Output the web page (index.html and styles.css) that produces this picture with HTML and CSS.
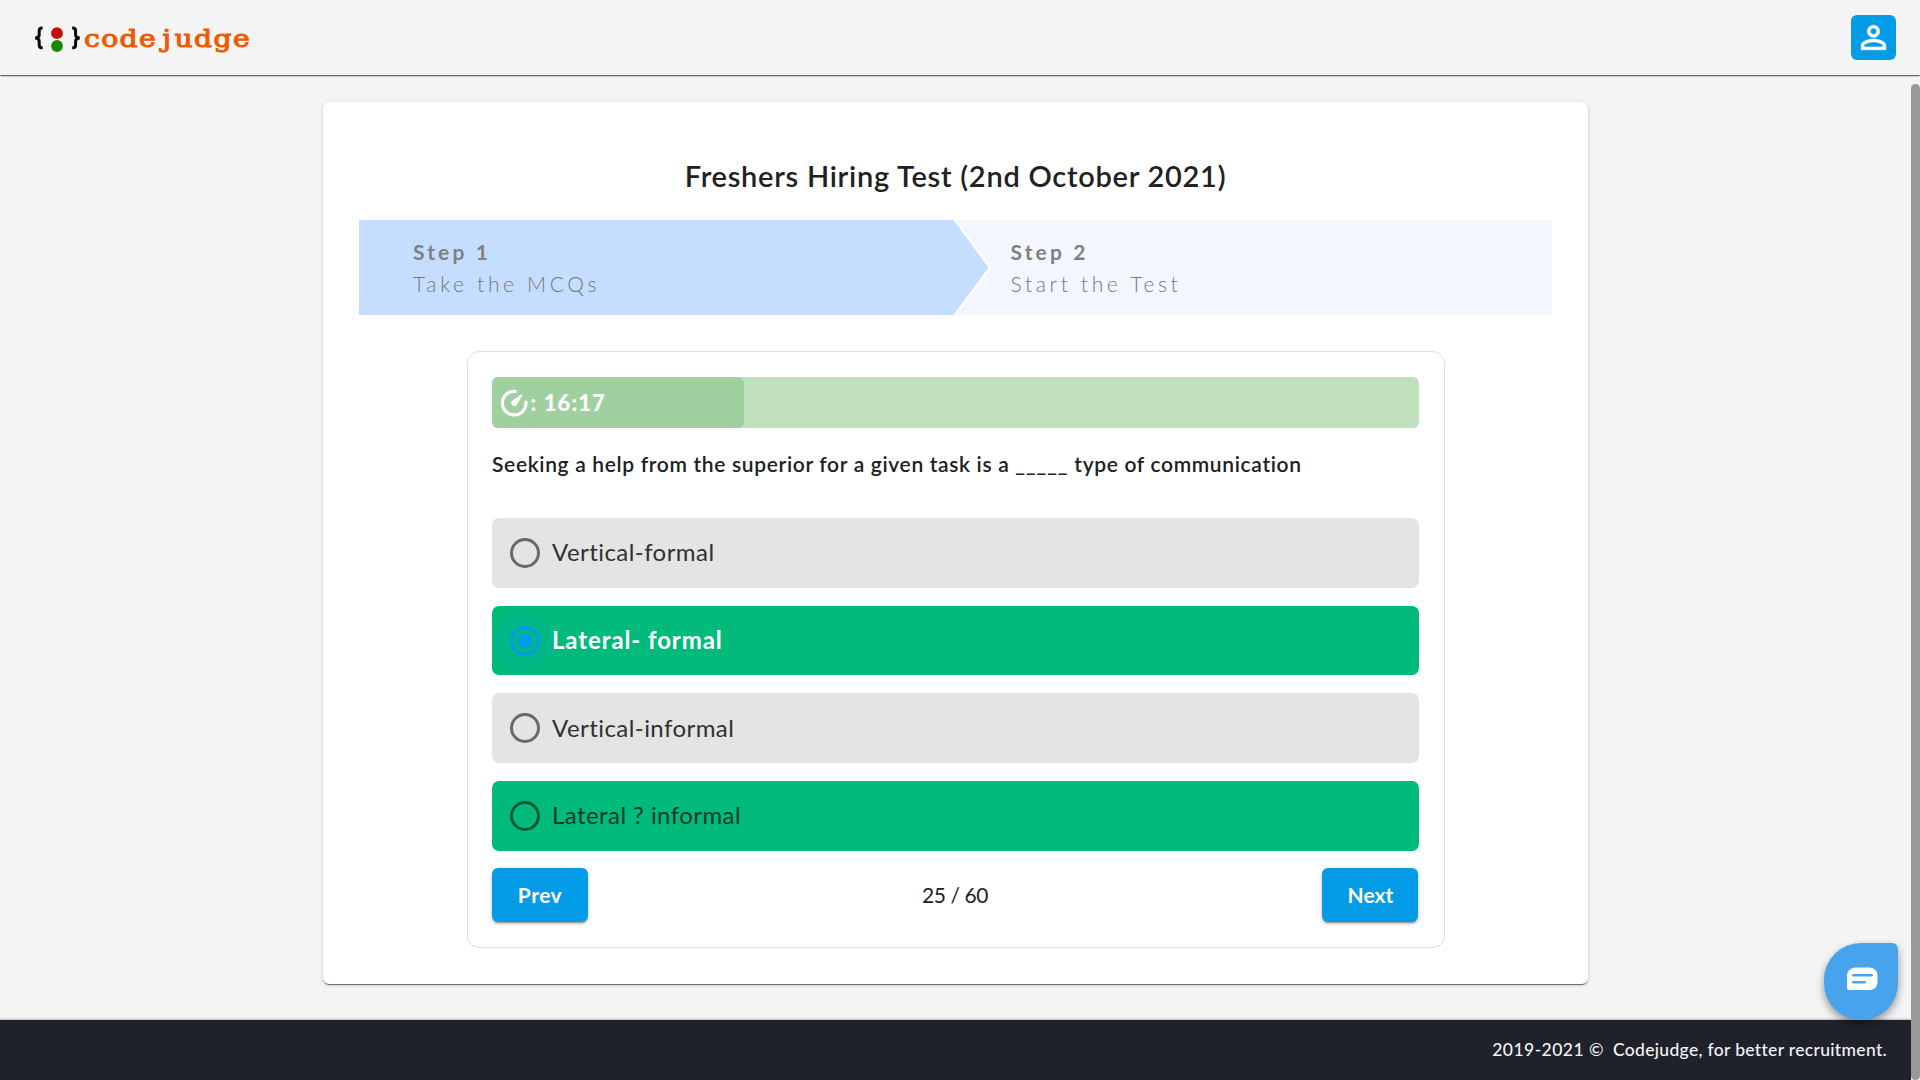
FILE: index.html
```html
<!DOCTYPE html>
<html lang="en">
<head>
<meta charset="utf-8">
<title>Codejudge</title>
<link rel="stylesheet" href="styles.css">
</head>
<body>
<header class="topbar">
  <a class="logo">
    <svg class="logo-mark" viewBox="0 0 48 28" width="48" height="28">
      <g fill="none" stroke="#0a0a0a" stroke-width="3">
        <path d="M8.600 3H7.800Q5.200 3 5.200 6V9.700Q5.200 12.700 1.200 12.900Q5.200 13.200 5.200 16.200V19.700Q5.200 22.800 7.800 22.800H8.600"/>
        <path d="M38.200 3H39Q41.600 3 41.600 6V9.700Q41.600 12.700 45.700 12.900Q41.600 13.200 41.600 16.200V19.700Q41.600 22.800 39 22.800H38.200"/>
      </g>
      <circle cx="23" cy="8.200" r="5.900" fill="#c40f0f"/>
      <circle cx="23" cy="21" r="5.900" fill="#148a05"/>
    </svg>
    <span class="logo-text">code<span class="logo-j">j</span>udge</span>
  </a>
  <button class="profile" aria-label="Profile">
    <svg viewBox="0 0 24 24" width="37" height="37" fill="#fff" stroke="#fff" stroke-width=".35"><path d="M12 5.900c1.160 0 2.100.940 2.100 2.100s-.940 2.100-2.100 2.100S9.900 9.160 9.900 8s.940-2.100 2.100-2.100m0 9c2.970 0 6.100 1.460 6.100 2.100v1.100H5.900V17c0-.640 3.130-2.100 6.100-2.100M12 4C9.790 4 8 5.790 8 8s1.790 4 4 4 4-1.790 4-4-1.790-4-4-4zm0 9c-2.670 0-8 1.340-8 4v3h16v-3c0-2.660-5.330-4-8-4z"/></svg>
  </button>
</header>
<div class="view">
  <div class="page">
    <main class="card">
      <h1 class="title">Freshers Hiring Test (2nd October 2021)</h1>
      <div class="steps">
        <div class="step step-active"><b class="step-name">Step 1</b><span class="step-text">Take the MCQs</span></div>
        <div class="step step-next"><b class="step-name">Step 2</b><span class="step-text">Start the Test</span></div>
        <svg class="arrow" viewBox="0 0 40 95" width="40" height="95"><path d="M0 0H3L38.500 47.500L3 95H0z" fill="#fff"/><path d="M0 0H0.500L35.500 47.500L0.500 95H0z" fill="#c5deff"/></svg>
      </div>
      <section class="quiz">
        <div class="timer">
          <div class="timer-fill" style="width:27.2%">
            <svg viewBox="0 0 28 28" width="28" height="28"><path d="M15.300 2.400A11.800 11.800 0 1 0 25.900 13" fill="none" stroke="#fff" stroke-width="3.200" stroke-linecap="round"/><path d="M21.800 5.600Q22.600 5.900 22.200 6.800L17 15.500A3.100 3.100 0 1 1 12.100 11.800L20.500 5.800Q21.200 5.300 21.800 5.600z" fill="#fff"/></svg>
            <span class="timer-text">: 16:17</span>
          </div>
        </div>
        <p class="question">Seeking a help from the superior for a given task is a <span class="blank">_____</span> type of communication</p>
        <div class="options">
          <label class="option"><i class="radio"></i><span class="label">Vertical-formal</span></label>
          <label class="option correct chosen"><i class="radio"></i><span class="label">Lateral- formal</span></label>
          <label class="option"><i class="radio"></i><span class="label">Vertical-informal</span></label>
          <label class="option correct"><i class="radio"></i><span class="label">Lateral ? informal</span></label>
        </div>
        <div class="pager">
          <button class="btn prev">Prev</button>
          <span class="count">25 / 60</span>
          <button class="btn next">Next</button>
        </div>
      </section>
    </main>
    <footer class="footer"><span class="years">2019-2021 ©</span><span>Codejudge, for better recruitment.</span></footer>
  </div>
  <div class="scroll"></div>
</div>
<button class="chat" aria-label="Chat">
  <svg viewBox="0 0 31 24" width="31" height="24"><path d="M8 0.500H23Q30.500 1.500 30.500 9V15Q30.500 22 23 23H2Q0 23 0 21V9Q0 1.500 8 0.500z" fill="#fff"/><path d="M6.300 8.200H24.700M6.300 15.200H17.700" stroke="#47a3ec" stroke-width="2.600" stroke-linecap="round"/></svg>
</button>
</body>
</html>
```
FILE: styles.css
```css
* { box-sizing: border-box; }
html, body { height: 100%; }
body {
  margin: 0;
  display: flex;
  flex-direction: column;
  overflow: hidden;
  background: #f4f4f4;
  color: #212121;
  font-family: Lato, "Liberation Sans", sans-serif;
}
button { border: 0; padding: 0; font-family: inherit; }

.topbar {
  flex: none;
  height: 75px;
  padding: 0 24px 0 34px;
  display: flex;
  align-items: center;
  justify-content: space-between;
  box-shadow: 0 2px 1px -1px rgba(0,0,0,.4), 0 1px 1px rgba(0,0,0,.24), 0 1px 3px rgba(0,0,0,.12);
}
.logo { display: flex; align-items: center; gap: 2px; padding-top: 3px; }
.logo-text {
  font: 25px/28px "DejaVu Serif", serif;
  letter-spacing: 1.2px;
  color: #ef5b04;
  -webkit-text-stroke: 1.1px #ef5b04;
  transform: scaleX(1.13);
  transform-origin: left;
}
.logo-j { padding: 0 2px 0 4.500px; }
.profile {
  width: 45px;
  height: 45px;
  border-radius: 6px;
  background: #049be7;
  display: flex;
  align-items: center;
  justify-content: center;
}

.view { flex: 1; min-height: 0; display: flex; }
.page { flex: 1; display: flex; flex-direction: column; justify-content: space-between; padding-top: 27px; }
.scroll { width: 9px; margin-top: 9px; border-radius: 5px; background: #999; }

.card {
  width: 1265px;
  height: 882px;
  margin-left: 323px;
  padding: 54px 36px 36px;
  display: flex;
  flex-direction: column;
  align-items: center;
  background: #fff;
  border-radius: 6px;
  box-shadow: 0 2px 1px -1px rgba(0,0,0,.4), 0 1px 1px rgba(0,0,0,.24), 0 1px 4px rgba(0,0,0,.14);
}
.title { margin: 0 0 24px; font-size: 29px; line-height: 40px; font-weight: 600; letter-spacing: .73px; }

.steps { position: relative; align-self: stretch; height: 95px; display: grid; grid-template-columns: 594.500px 1fr; }
.step { display: flex; flex-direction: column; padding: 15px 0 0 54px; font-size: 21px; line-height: 33px; color: #808080; }
.step-active { background: #c5deff; }
.step-next { background: #f3f6fe; padding-left: 57px; }
.step-name { font-weight: 700; letter-spacing: 3.150px; }
.step-text { margin-top: -1px; font-weight: 300; letter-spacing: 3.650px; color: #74777c; }
.arrow { position: absolute; left: 594px; top: 0; }

.quiz {
  width: 978px;
  height: 597px;
  margin-top: 36px;
  padding: 25px 25px 25px 24px;
  display: flex;
  flex-direction: column;
  border: 1px solid #dedede;
  border-radius: 12px;
}
.timer { height: 51px; border-radius: 6px; background: #c0dfbc; }
.timer-fill { height: 51px; padding-left: 8px; border-radius: 6px; background: #a0cfa0; display: flex; align-items: center; gap: 3px; }
.timer-text { color: #fff; font-size: 22px; font-weight: 900; letter-spacing: 1.100px; }
.question { margin: 20px 0 39px .5px; font-size: 21px; line-height: 31px; font-weight: 600; letter-spacing: .660px; white-space: nowrap; }
.blank { letter-spacing: .900px; }

.options { display: grid; grid-auto-rows: 69.700px; gap: 18px; }
.option { display: flex; align-items: center; gap: 12.500px; padding-left: 18px; border-radius: 7px; background: #e4e4e4; color: #303030; font-size: 24px; letter-spacing: .440px; }
.label { padding-bottom: 2px; }
.correct { background: #02bb7b; color: #04382a; }
.chosen { color: #fff; font-weight: 700; letter-spacing: .900px; }
.radio { width: 30px; height: 30px; border-radius: 50%; border: 3px solid #696969; }
.correct .radio { border-color: #025639; }
.chosen .radio {
  border-color: #049be7;
  background: radial-gradient(circle, #049be7 7px, transparent 8px);
  box-shadow: 0 0 0 15px rgba(4,155,231,.1);
  background-color: rgba(4,155,231,.1);
}

.pager { margin-top: 17px; display: flex; justify-content: space-between; align-items: center; }
.btn {
  width: 96px;
  height: 54px;
  border-radius: 6px;
  background: #049be7;
  color: #fff;
  font-size: 21px;
  font-weight: 700;
  letter-spacing: .1px;
  box-shadow: 0 3px 1px -2px rgba(0,0,0,.2), 0 2px 2px rgba(0,0,0,.14), 0 1px 5px rgba(0,0,0,.18);
}
.prev { letter-spacing: .500px; padding-left: 1px; }
.count { font-size: 21px; letter-spacing: -.4px; }

.footer {
  height: 60px;
  padding: 0 24px 2px 0;
  display: flex;
  align-items: center;
  justify-content: flex-end;
  gap: 9px;
  background: #1f212b;
  box-shadow: 0 -1px 2px rgba(0,0,0,.25);
  color: #f4f4f4;
  font-size: 17.500px;
  font-weight: 500;
  letter-spacing: .320px;
}
.years { letter-spacing: .460px; }
.chat {
  position: absolute;
  left: 1824px;
  top: 943px;
  width: 74px;
  height: 77px;
  padding: 0 0 5px 2px;
  border-radius: 37px 6px 37px 37px;
  background: #47a3ec;
  display: flex;
  align-items: center;
  justify-content: center;
  box-shadow: 0 4px 8px rgba(0,0,0,.4);
}
```
